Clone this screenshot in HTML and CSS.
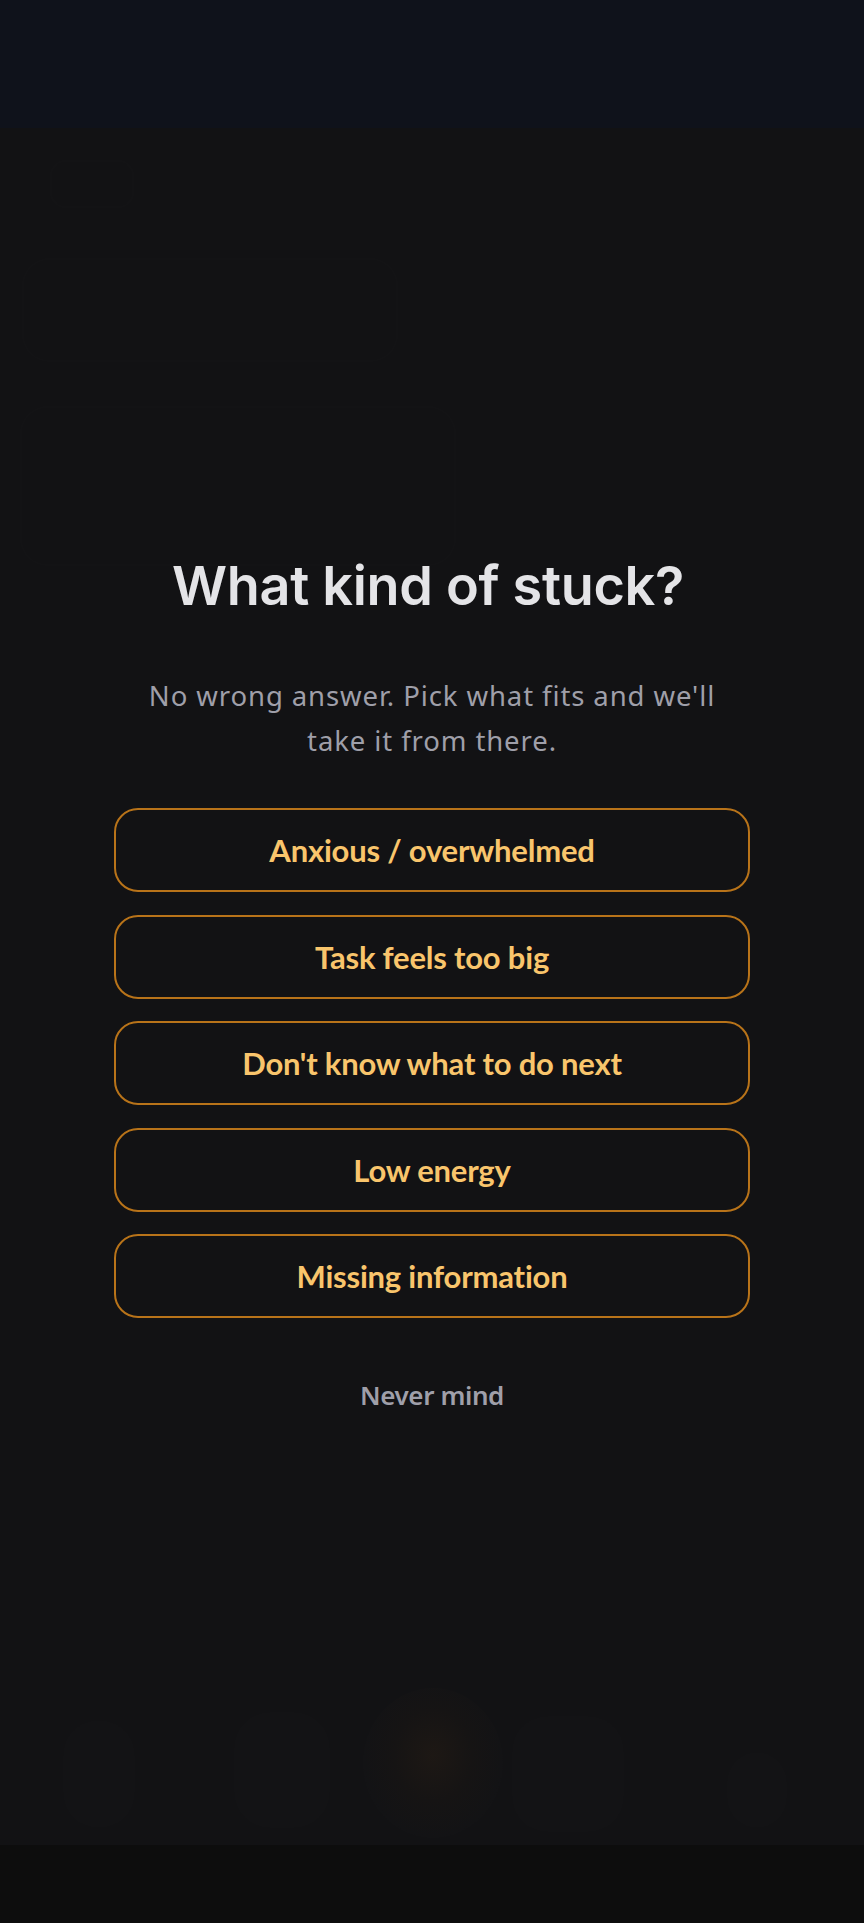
FILE: index.html
```html
<!DOCTYPE html>
<html lang="en">
<head>
<meta charset="utf-8">
<title>What kind of stuck?</title>
<link rel="stylesheet" href="styles.css">
</head>
<body>
<div class="app">
  <header class="topbar"></header>
  <main class="stage">
    <div class="backdrop" aria-hidden="true">
      <div class="ghost ghost-chip"></div>
      <div class="ghost ghost-card"></div>
      <div class="ghost ghost-panel"></div>
      <div class="ghost-nav">
        <span class="ghost-pill"></span>
        <span class="ghost-pill"></span>
        <span class="ghost-orb"></span>
        <span class="ghost-pill"></span>
        <span class="ghost-pill"></span>
      </div>
    </div>
    <section class="dialog" role="dialog" aria-labelledby="stuck-title">
      <h1 class="title" id="stuck-title">What kind of stuck?</h1>
      <p class="lead">No wrong answer. Pick what fits and we'll take it from there.</p>
      <div class="options">
        <button class="option" type="button">Anxious / overwhelmed</button>
        <button class="option" type="button">Task feels too big</button>
        <button class="option" type="button">Don't know what to do next</button>
        <button class="option" type="button">Low energy</button>
        <button class="option" type="button">Missing information</button>
      </div>
      <button class="dismiss" type="button">Never mind</button>
    </section>
  </main>
  <footer class="safe-area"></footer>
</div>
</body>
</html>
```
FILE: styles.css
```css
* { box-sizing: border-box; }

html, body {
  margin: 0;
  padding: 0;
  background: #121214;
}

body {
  font-family: "Lato", "Noto Sans", sans-serif;
  color: #e4e4e7;
}

.app {
  display: flex;
  flex-direction: column;
  min-height: 1923px;
}

.topbar {
  height: 128px;
  background: #0f121b;
  flex: none;
}

.stage {
  position: relative;
  flex: 1;
  background: #121214;
  padding-top: 425px;
  display: flex;
  justify-content: center;
  overflow: hidden;
}

.safe-area {
  height: 78px;
  flex: none;
  background: #0d0d0d;
}

/* faint app content behind the overlay */
.backdrop {
  position: absolute;
  inset: 0;
  pointer-events: none;
}

.ghost {
  position: absolute;
  border-radius: 28px;
  background: rgba(255, 255, 255, 0.005);
  border: 2px solid rgba(255, 255, 255, 0.007);
}

.ghost-chip { left: 50px; top: 32px; width: 84px; height: 48px; border-radius: 16px; }
.ghost-card { left: 22px; top: 130px; width: 376px; height: 104px; }
.ghost-panel { left: 20px; top: 278px; width: 436px; height: 160px; }

.ghost-nav {
  position: absolute;
  left: 0;
  right: 0;
  top: 1530px;
  height: 190px;
}

.ghost-pill {
  position: absolute;
  top: 62px;
  width: 72px;
  height: 108px;
  border-radius: 36px;
  background: rgba(255, 255, 255, 0.006);
}
.ghost-pill:nth-child(1) { left: 63px; }
.ghost-pill:nth-child(2) { left: 234px; top: 54px; width: 96px; height: 116px; }
.ghost-pill:nth-child(4) { left: 512px; top: 58px; width: 112px; height: 116px; }
.ghost-pill:nth-child(5) { left: 727px; top: 94px; width: 60px; height: 76px; }

.ghost-orb {
  position: absolute;
  left: 363px;
  top: 30px;
  width: 140px;
  height: 150px;
  border-radius: 50%;
  background: radial-gradient(ellipse at 50% 45%, rgba(120, 72, 24, 0.11) 0%, rgba(90, 56, 20, 0.05) 40%, rgba(255, 255, 255, 0.004) 70%, rgba(255, 255, 255, 0) 100%);
}

/* dialog */
.dialog {
  position: relative;
  width: 636px;
  display: flex;
  flex-direction: column;
  align-items: center;
}

.title {
  margin: 0;
  font-family: "Inter", "Roboto", sans-serif;
  font-weight: 600;
  font-size: 54px;
  line-height: 65px;
  letter-spacing: -0.3px;
  color: #e4e4e7;
  text-align: center;
  transform: translateX(-4px);
}

.lead {
  margin: 55px 0 0;
  max-width: 604px;
  font-family: "Noto Sans", "Lato", sans-serif;
  font-size: 27.5px;
  line-height: 45px;
  letter-spacing: 0.9px;
  font-weight: 400;
  color: #9f9fa9;
  text-align: center;
}

.options {
  margin-top: 45px;
  width: 100%;
  display: flex;
  flex-direction: column;
  gap: 22.5px;
}

.option {
  height: 84px;
  width: 100%;
  display: flex;
  align-items: center;
  justify-content: center;
  background: transparent;
  border: 2px solid #b87319;
  border-radius: 24px;
  font-family: "Lato", "Noto Sans", sans-serif;
  font-weight: 700;
  font-size: 31px;
  letter-spacing: -0.2px;
  color: #f9c56c;
  cursor: pointer;
  padding: 0 24px;
}

.dismiss {
  margin-top: 59px;
  background: transparent;
  border: 0;
  padding: 0;
  height: 36px;
  line-height: 36px;
  font-family: "Noto Sans", "Lato", sans-serif;
  font-weight: 600;
  font-size: 26px;
  letter-spacing: -0.4px;
  color: #9f9fa9;
  cursor: pointer;
}
```
